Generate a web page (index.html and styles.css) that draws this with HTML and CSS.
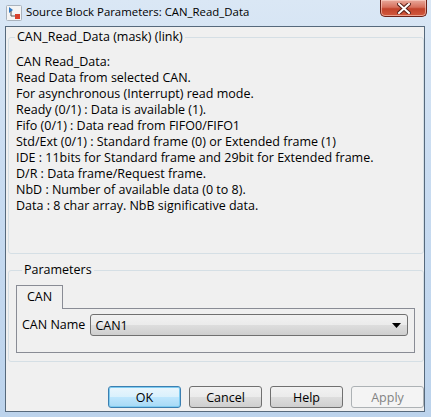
FILE: index.html
```html
<!DOCTYPE html>
<html>
<head>
<meta charset="utf-8">
<title>Source Block Parameters: CAN_Read_Data</title>
<link rel="stylesheet" href="styles.css">
</head>
<body>
<div class="window">
  <div class="titlebar">
    <svg class="app-icon" width="16" height="16" viewBox="0 0 16 16">
      <rect x="0.5" y="0.5" width="15" height="15" rx="1" fill="#f4f4f4" stroke="#a9b2bc"/>
      <path d="M3 2 L3 8 L7 5 Z" fill="#2f78c4"/>
      <path d="M5 6 L5 11 L9 11" fill="none" stroke="#555" stroke-width="1"/>
      <rect x="9" y="9" width="5" height="5" fill="#d9412b"/>
    </svg>
    <span class="title">Source Block Parameters: CAN_Read_Data</span>
    <div class="close">
      <svg width="14" height="11" viewBox="0 0 14 11">
        <path d="M2 1 L12 10 M12 1 L2 10" stroke="#5a2018" stroke-width="4" stroke-linecap="square"/>
        <path d="M2 1 L12 10 M12 1 L2 10" stroke="#ffffff" stroke-width="2" stroke-linecap="square"/>
      </svg>
    </div>
  </div>
  <div class="client">
    <fieldset class="group mask">
      <legend>CAN_Read_Data (mask) (link)</legend>
      <div class="desc">
        <div>CAN Read_Data:</div>
        <div>Read Data from selected CAN.</div>
        <div>For asynchronous (Interrupt) read mode.</div>
        <div>Ready (0/1) : Data is available (1).</div>
        <div>Fifo (0/1) : Data read from FIFO0/FIFO1</div>
        <div>Std/Ext (0/1) : Standard frame (0) or Extended frame (1)</div>
        <div>IDE : 11bits for Standard frame and 29bit for Extended frame.</div>
        <div>D/R : Data frame/Request frame.</div>
        <div>NbD : Number of available data (0 to 8).</div>
        <div>Data : 8 char array. NbB significative data.</div>
      </div>
    </fieldset>
    <fieldset class="group params">
      <legend>Parameters</legend>
      <div class="tabs">
        <div class="tab">CAN</div>
      </div>
      <div class="pane">
        <span class="label">CAN Name</span>
        <div class="combo">
          <span>CAN1</span>
          <svg width="9" height="5" viewBox="0 0 9 5"><path d="M0 0 H9 L4.5 5 Z" fill="#000"/></svg>
        </div>
      </div>
    </fieldset>
    <div class="buttons">
      <button class="btn default">OK</button>
      <button class="btn">Cancel</button>
      <button class="btn">Help</button>
      <button class="btn disabled">Apply</button>
    </div>
  </div>
</div>
</body>
</html>
```

FILE: styles.css
```css
html, body {
  margin: 0;
  padding: 0;
}
body {
  font-family: "Open Sans", "Noto Sans", sans-serif;
  font-size: 12.5px;
  color: #000;
}
.window {
  width: 431px;
  height: 417px;
  box-sizing: border-box;
  background: linear-gradient(180deg, #dae7f5 0%, #c9dcf1 40%, #bcd3ec 100%);
  display: flex;
  flex-direction: column;
}
.titlebar {
  height: 26px;
  display: flex;
  align-items: flex-start;
  flex: none;
}
.app-icon {
  margin: 5px 0 0 6px;
  flex: none;
}
.title {
  margin: 4px 0 0 4px;
  font-size: 11.4px;
  line-height: 16px;
  color: #000;
}
.close {
  margin-left: auto;
  margin-right: 4px;
  width: 45px;
  height: 16px;
  border: 1px solid #6b2118;
  border-top: none;
  border-radius: 0 0 5px 5px;
  background: linear-gradient(180deg, #e9a99b 0%, #d7705c 45%, #c2432b 55%, #d2593d 100%);
  box-shadow: inset 0 0 0 1px rgba(255,220,210,0.55);
  display: flex;
  align-items: center;
  justify-content: center;
}
.client {
  margin: 0 6px 5px 5px;
  flex: 1;
  border: 1px solid #56697c;
  background: #f0f0f0;
  display: flex;
  flex-direction: column;
  padding: 0 0 3px 2px;
}
.group {
  margin: 0;
  border: 1px solid #d5dfe5;
  border-radius: 3px;
  padding: 0;
  min-width: 0;
}
.group legend {
  padding: 0 2px;
  margin-left: 6px;
  line-height: 16px;
}
.mask {
  margin-top: 2px;
  height: 225px;
  box-sizing: border-box;
}
.desc {
  padding: 9px 0 0 7px;
  line-height: 16px;
}
.params {
  margin-top: 8px;
  padding: 7px 8px 8px 7px;
}
.tabs {
  display: flex;
}
.tab {
  width: 45px;
  height: 23px;
  border: 1px solid #898c95;
  border-bottom: none;
  background: #f0f0f0;
  text-align: center;
  line-height: 22px;
  margin-bottom: -1px;
  position: relative;
  z-index: 1;
}
.pane {
  border: 1px solid #898c95;
  height: 38px;
  display: flex;
  align-items: flex-start;
  padding: 5px 6px 0 5px;
}
.label {
  line-height: 22px;
  margin-right: 5px;
}
.combo {
  flex: 1;
  height: 20px;
  border: 1px solid #707070;
  border-radius: 3px;
  background: linear-gradient(180deg, #f2f2f2 0%, #ebebeb 50%, #dddddd 51%, #cfcfcf 100%);
  display: flex;
  align-items: center;
  justify-content: space-between;
  padding: 0 6px 0 4px;
}
.buttons {
  margin-top: auto;
  display: flex;
  justify-content: flex-end;
  gap: 8px;
}
.btn {
  width: 73px;
  height: 22px;
  box-sizing: border-box;
  font-family: inherit;
  font-size: 12.5px;
  color: #000;
  border: 1px solid #707070;
  border-radius: 3px;
  background: linear-gradient(180deg, #f2f2f2 0%, #ebebeb 50%, #dddddd 51%, #cfcfcf 100%);
  padding: 0;
  margin: 0;
}
.btn.default {
  border-color: #3c7fb1;
  background: linear-gradient(180deg, #eaf6fd 0%, #d9f0fc 50%, #bee6fd 51%, #a7d9f5 100%);
  box-shadow: inset 0 0 0 1px #7ecbf0;
}
.btn.disabled {
  border-color: #adb2b5;
  background: #f4f4f4;
  color: #838383;
}
```
